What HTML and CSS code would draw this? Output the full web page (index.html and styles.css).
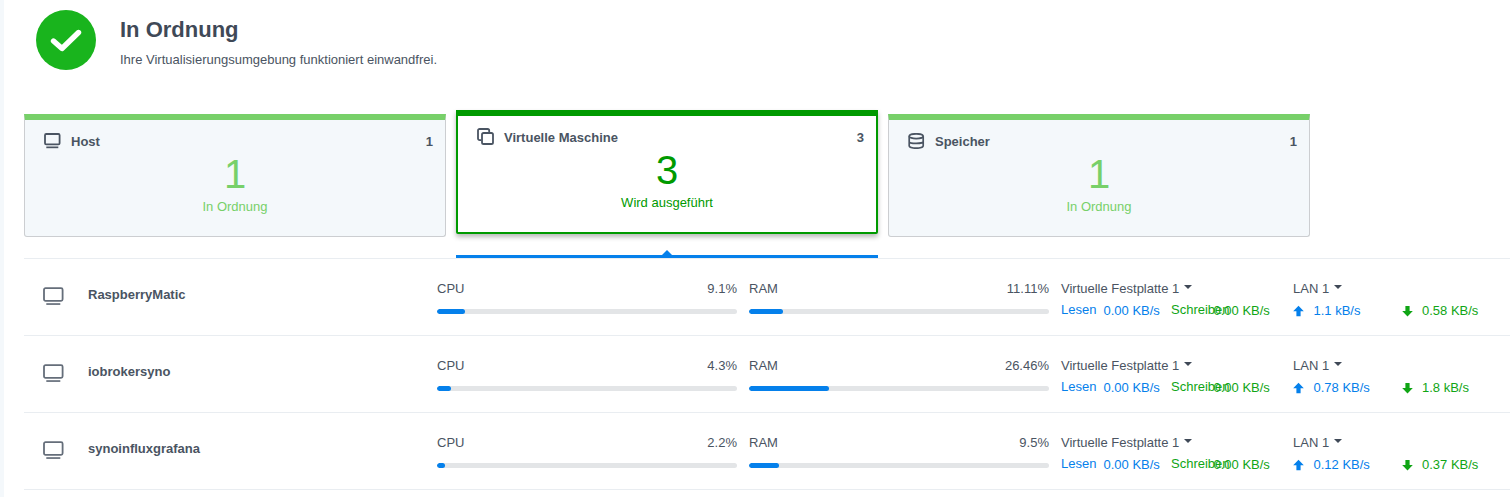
FILE: index.html
```html
<!DOCTYPE html>
<html lang="de">
<head>
<meta charset="utf-8">
<title>Virtualisierung</title>
<link rel="stylesheet" href="styles.css">
</head>
<body>
<main class="page">
  <header class="status">
    <span class="status-icon">
      <svg width="32" height="24" viewBox="0 0 32 24"><path d="M3.5 13 L12 20.5 L28.5 4.5" fill="none" stroke="#fff" stroke-width="5.4" stroke-linecap="round" stroke-linejoin="round"/></svg>
    </span>
    <div class="status-text">
      <h1>In Ordnung</h1>
      <p>Ihre Virtualisierungsumgebung funktioniert einwandfrei.</p>
    </div>
  </header>

  <section class="cards">
    <article class="card">
      <div class="card-head">
        <svg class="card-icon" width="18" height="16" viewBox="0 0 18 16"><rect x="1" y="1" width="14.6" height="10.4" rx="1.2" fill="none" stroke="#4a5462" stroke-width="1.8"/><rect x="2.3" y="13.5" width="12" height="1.7" fill="#4a5462"/></svg>
        <span class="card-title">Host</span><span class="card-count">1</span>
      </div>
      <div class="card-num">1</div>
      <div class="card-state">In Ordnung</div>
    </article>
    <article class="card card-active">
      <div class="card-head">
        <svg class="card-icon" width="18" height="18" viewBox="0 0 18 18"><path d="M4.2 12.2H2.6A1.6 1.6 0 0 1 1 10.6V2.6A1.6 1.6 0 0 1 2.6 1h8a1.6 1.6 0 0 1 1.6 1.6v1.6" fill="none" stroke="#4a5462" stroke-width="1.8"/><rect x="5" y="5" width="11" height="11" rx="1.6" fill="none" stroke="#4a5462" stroke-width="1.8"/></svg>
        <span class="card-title">Virtuelle Maschine</span><span class="card-count">3</span>
      </div>
      <div class="card-num">3</div>
      <div class="card-state">Wird ausgeführt</div>
    </article>
    <article class="card">
      <div class="card-head">
        <svg class="card-icon" width="18" height="16" viewBox="0 0 18 16"><ellipse cx="8.2" cy="3.2" rx="7" ry="2.4" fill="none" stroke="#4a5462" stroke-width="1.7"/><path d="M1.2 3.2V12.8C1.2 14.1 4.3 15.2 8.2 15.2S15.2 14.1 15.2 12.8V3.2M1.2 8.4C1.2 9.7 4.3 10.4 8.2 10.4S15.2 9.7 15.2 8.4" fill="none" stroke="#4a5462" stroke-width="1.7"/></svg>
        <span class="card-title">Speicher</span><span class="card-count">1</span>
      </div>
      <div class="card-num">1</div>
      <div class="card-state">In Ordnung</div>
    </article>
  </section>

  <div class="tab-line"><span class="tab-mark"></span></div>

  <section class="rows">
    <div class="row">
      <div class="vm">
        <svg class="vm-icon" width="22" height="19" viewBox="0 0 22 19"><rect x="1" y="1.2" width="18.6" height="12.6" rx="1.5" fill="none" stroke="#656e7a" stroke-width="1.8"/><rect x="3.3" y="16.2" width="14" height="1.7" fill="#656e7a"/></svg>
        <span class="vm-name">RaspberryMatic</span>
      </div>
      <div class="meter">
        <div class="meter-top"><span>CPU</span><span>9.1%</span></div>
        <div class="bar"><div class="fill" style="width:9.1%"></div></div>
      </div>
      <div class="meter">
        <div class="meter-top"><span>RAM</span><span>11.11%</span></div>
        <div class="bar"><div class="fill" style="width:11.11%"></div></div>
      </div>
      <div class="io io-disk">
        <div class="io-top">Virtuelle Festplatte 1<span class="caret"></span></div>
        <div class="io-vals">
          <div class="pair blue"><span class="lbl">Lesen</span><span>0.00 KB/s</span></div>
          <div class="pair green"><span class="lbl">Schreiben</span><span>0.00 KB/s</span></div>
        </div>
      </div>
      <div class="io io-lan">
        <div class="io-top">LAN 1<span class="caret"></span></div>
        <div class="io-vals">
          <div class="pair blue"><svg class="arrow" width="11" height="12" viewBox="0 0 11 12"><path d="M5.5 0.8 L10.8 6.3 H7.6 V11.2 H3.4 V6.3 H0.2 Z" fill="#0580eb"/></svg><span>1.1 kB/s</span></div>
          <div class="pair green"><svg class="arrow" width="11" height="12" viewBox="0 0 11 12"><path d="M5.5 11.5 L10.8 6 H7.6 V1 H3.4 V6 H0.2 Z" fill="#10a515"/></svg><span>0.58 KB/s</span></div>
        </div>
      </div>
    </div>

    <div class="row">
      <div class="vm">
        <svg class="vm-icon" width="22" height="19" viewBox="0 0 22 19"><rect x="1" y="1.2" width="18.6" height="12.6" rx="1.5" fill="none" stroke="#656e7a" stroke-width="1.8"/><rect x="3.3" y="16.2" width="14" height="1.7" fill="#656e7a"/></svg>
        <span class="vm-name">iobrokersyno</span>
      </div>
      <div class="meter">
        <div class="meter-top"><span>CPU</span><span>4.3%</span></div>
        <div class="bar"><div class="fill" style="width:4.3%"></div></div>
      </div>
      <div class="meter">
        <div class="meter-top"><span>RAM</span><span>26.46%</span></div>
        <div class="bar"><div class="fill" style="width:26.46%"></div></div>
      </div>
      <div class="io io-disk">
        <div class="io-top">Virtuelle Festplatte 1<span class="caret"></span></div>
        <div class="io-vals">
          <div class="pair blue"><span class="lbl">Lesen</span><span>0.00 KB/s</span></div>
          <div class="pair green"><span class="lbl">Schreiben</span><span>0.00 KB/s</span></div>
        </div>
      </div>
      <div class="io io-lan">
        <div class="io-top">LAN 1<span class="caret"></span></div>
        <div class="io-vals">
          <div class="pair blue"><svg class="arrow" width="11" height="12" viewBox="0 0 11 12"><path d="M5.5 0.8 L10.8 6.3 H7.6 V11.2 H3.4 V6.3 H0.2 Z" fill="#0580eb"/></svg><span>0.78 KB/s</span></div>
          <div class="pair green"><svg class="arrow" width="11" height="12" viewBox="0 0 11 12"><path d="M5.5 11.5 L10.8 6 H7.6 V1 H3.4 V6 H0.2 Z" fill="#10a515"/></svg><span>1.8 kB/s</span></div>
        </div>
      </div>
    </div>

    <div class="row">
      <div class="vm">
        <svg class="vm-icon" width="22" height="19" viewBox="0 0 22 19"><rect x="1" y="1.2" width="18.6" height="12.6" rx="1.5" fill="none" stroke="#656e7a" stroke-width="1.8"/><rect x="3.3" y="16.2" width="14" height="1.7" fill="#656e7a"/></svg>
        <span class="vm-name">synoinfluxgrafana</span>
      </div>
      <div class="meter">
        <div class="meter-top"><span>CPU</span><span>2.2%</span></div>
        <div class="bar"><div class="fill" style="width:2.2%"></div></div>
      </div>
      <div class="meter">
        <div class="meter-top"><span>RAM</span><span>9.5%</span></div>
        <div class="bar"><div class="fill" style="width:9.5%"></div></div>
      </div>
      <div class="io io-disk">
        <div class="io-top">Virtuelle Festplatte 1<span class="caret"></span></div>
        <div class="io-vals">
          <div class="pair blue"><span class="lbl">Lesen</span><span>0.00 KB/s</span></div>
          <div class="pair green"><span class="lbl">Schreiben</span><span>0.00 KB/s</span></div>
        </div>
      </div>
      <div class="io io-lan">
        <div class="io-top">LAN 1<span class="caret"></span></div>
        <div class="io-vals">
          <div class="pair blue"><svg class="arrow" width="11" height="12" viewBox="0 0 11 12"><path d="M5.5 0.8 L10.8 6.3 H7.6 V11.2 H3.4 V6.3 H0.2 Z" fill="#0580eb"/></svg><span>0.12 KB/s</span></div>
          <div class="pair green"><svg class="arrow" width="11" height="12" viewBox="0 0 11 12"><path d="M5.5 11.5 L10.8 6 H7.6 V1 H3.4 V6 H0.2 Z" fill="#10a515"/></svg><span>0.37 KB/s</span></div>
        </div>
      </div>
    </div>
  </section>
</main>
</body>
</html>
```
FILE: styles.css
```css
* { box-sizing: border-box; }
html, body { margin: 0; height: 100%; }
body {
  background: #fff;
  color: #4a5462;
  font-family: "Liberation Sans", Arial, sans-serif;
  font-size: 13px;
  overflow: hidden;
}
.page {
  height: 497px;
  border-left: 4px solid #f4f8fb;
  padding-left: 20px;
}

/* status header */
.status {
  display: flex;
  height: 110px;
  padding: 10px 0 0 12px;
}
.status-icon {
  flex: none;
  width: 60px;
  height: 60px;
  border-radius: 50%;
  background: #19b41d;
  display: flex;
  align-items: center;
  justify-content: center;
}
.status-text { margin-left: 24px; }
.status-text h1 {
  margin: 8px 0 0;
  font-size: 22px;
  line-height: 24px;
  font-weight: bold;
  color: #3f4957;
}
.status-text p {
  margin: 9px 0 0;
  font-size: 13px;
  line-height: 17px;
  color: #4a5462;
}

/* cards */
.cards {
  display: flex;
  gap: 10px;
  height: 145px;
  align-items: flex-start;
}
.card {
  flex: none;
  width: 422px;
  height: 123px;
  margin-top: 4px;
  background: #f4f8fb;
  border: 1px solid #ccced1;
  border-top: 6px solid #77d069;
  border-radius: 0 0 3px 3px;
  text-align: center;
}
.card-active {
  height: 124px;
  margin-top: 0;
  background: #fff;
  border: 2px solid #009a00;
  border-top-width: 6px;
  border-radius: 0 0 2px 2px;
  box-shadow: 0 3px 5px rgba(0, 0, 0, .28);
}
.card-head {
  display: flex;
  align-items: center;
  height: 30px;
  margin-top: 6px;
  padding: 0 12px 0 19px;
  text-align: left;
}
.card-icon { flex: none; }
.card-title {
  margin-left: 9px;
  font-size: 13px;
  font-weight: bold;
  color: #4a5462;
}
.card-count {
  margin-left: auto;
  font-size: 13px;
  font-weight: bold;
  color: #4a5462;
}
.card-num {
  font-size: 40px;
  line-height: 40px;
  color: #77d069;
  margin-top: -2px;
}
.card-state {
  font-size: 13px;
  line-height: 17px;
  color: #77d069;
  margin-top: 4px;
}
.card-active .card-num,
.card-active .card-state { color: #009a00; }

/* selected-tab line */
.tab-line {
  width: 422px;
  height: 3px;
  margin-left: 432px;
  background: #0580eb;
  position: relative;
}
.tab-mark {
  position: absolute;
  left: 206px;
  top: -5px;
  border-left: 5px solid transparent;
  border-right: 5px solid transparent;
  border-bottom: 5px solid #0580eb;
}

/* rows */
.rows { border-top: 1px solid #e9edf1; }
.row {
  display: flex;
  height: 77px;
  border-bottom: 1px solid #e9edf1;
  padding-top: 21px;
}
.vm {
  flex: none;
  width: 413px;
  display: flex;
  align-items: flex-start;
  padding-left: 19px;
}
.vm-icon { flex: none; margin-top: 7px; }
.vm-name {
  margin-left: 23px;
  font-size: 13px;
  line-height: 30px;
  font-weight: bold;
  color: #4a5462;
}
.meter { flex: none; width: 300px; margin-right: 12px; }
.meter-top {
  display: flex;
  justify-content: space-between;
  line-height: 17px;
  color: #4a5462;
}
.bar {
  height: 5px;
  margin-top: 12px;
  border-radius: 3px;
  background: #e3e5e7;
  overflow: hidden;
}
.fill {
  box-sizing: content-box;
  height: 100%;
  min-width: 6px;
  padding-right: 1px;
  background: #0580eb;
  border-radius: 3px;
}
.io { flex: none; }
.io-disk { width: 232px; }
.io-lan { width: 217px; }
.io-top {
  line-height: 17px;
  color: #4a5462;
  white-space: nowrap;
}
.caret {
  display: inline-block;
  vertical-align: 4px;
  margin-left: 5px;
  border-left: 4px solid transparent;
  border-right: 4px solid transparent;
  border-top: 4px solid #3f4957;
}
.io-vals {
  display: flex;
  margin-top: 5px;
  line-height: 17px;
  white-space: nowrap;
}
.pair { display: flex; }
.blue { color: #0580eb; }
.green { color: #10a515; }
.io-disk .pair { width: 110px; }
.lbl {
  width: 42.5px;
  flex: none;
  position: relative;
  top: -1px;
}
.io-lan .pair { width: 110.5px; align-items: center; }
.arrow { flex: none; margin-right: 9.5px; }
```
